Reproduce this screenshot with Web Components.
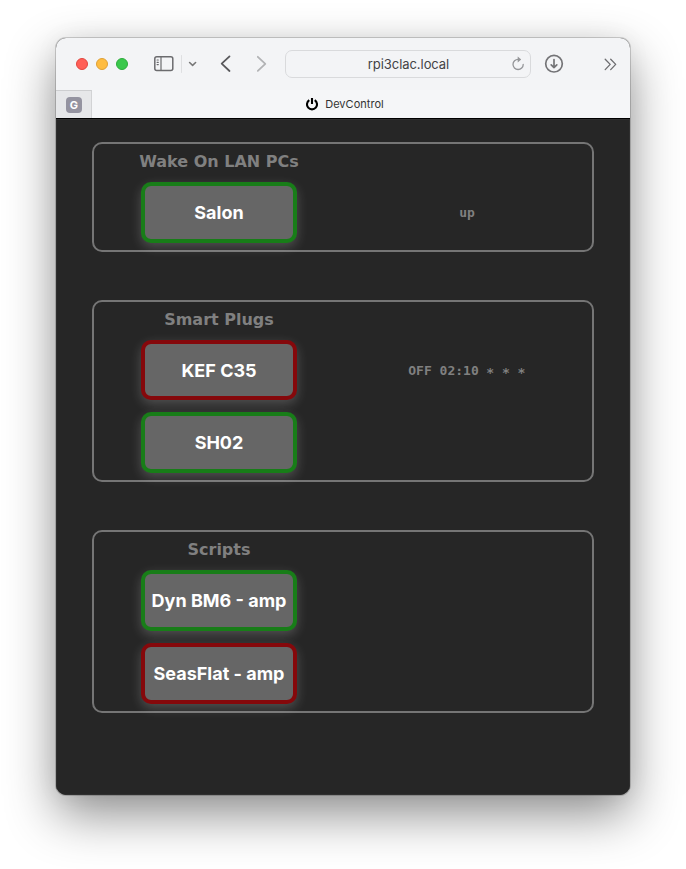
<!DOCTYPE html>
<html lang="en">
<head>
<meta charset="utf-8">
<title>DevControl</title>
<style>
html,body{margin:0;height:100%;background:#fff;overflow:hidden}
body{box-sizing:border-box;padding:38px 56px 74px}
</style>
</head>
<body>
<browser-window>
  <browser-toolbar slot="toolbar" address="rpi3clac.local"></browser-toolbar>
  <tab-strip slot="tabs" pinned="G">DevControl</tab-strip>
  <control-group heading="Wake On LAN PCs" style="height:110px">
    <device-row state="on" name="Salon" style="--h:61px">up</device-row>
  </control-group>
  <control-group heading="Smart Plugs" style="height:182px">
    <device-row state="off" name="KEF C35" style="--h:60px;--pb:0px">OFF 02:10 ∗ ∗ ∗</device-row>
    <device-row state="on" name="SH02" style="--h:61px"></device-row>
  </control-group>
  <control-group heading="Scripts" style="height:183px">
    <device-row state="on" name="Dyn BM6 - amp" style="--h:61px"></device-row>
    <device-row state="off" name="SeasFlat - amp" style="--h:61px"></device-row>
  </control-group>
</browser-window>
<script>
function define(name, render) {
  customElements.define(name, class extends HTMLElement {
    constructor() {
      super();
      this.attachShadow({mode: "open"}).innerHTML = render(this);
    }
  });
}

define("browser-window", () => `
<style>
:host{display:flex;flex-direction:column;box-sizing:border-box;width:574px;height:757px;border-radius:10px;overflow:hidden;background:#262626;
box-shadow:0 0 0 1px rgba(0,0,0,.17),0 20px 50px rgba(0,0,0,.44),0 0 24px rgba(0,0,0,.05)}
main{flex:1;display:flex;flex-direction:column;gap:48px;padding:23px 36px 0;border-top:1px solid #000;box-shadow:inset 0 0 0 1px #2f2f2f}
</style>
<slot name="toolbar"></slot><slot name="tabs"></slot><main><slot></slot></main>`);

define("browser-toolbar", el => `
<style>
:host{display:flex;align-items:center;height:52px;box-sizing:border-box;background:#f3f4f6;padding-left:20px;flex:none}
i{width:12px;height:12px;border-radius:50%;margin-right:8px;box-sizing:border-box;border:1px solid #e2463f;background:#ff5f57}
i.y{background:#febc40;border-color:#dfa035}i.g{background:#3ac84c;border-color:#2eac3c}
svg{display:block;fill:none;stroke-linecap:round;stroke-linejoin:round;flex:none}
.address{display:grid;grid-template-columns:1fr auto;align-items:center;box-sizing:border-box;width:246px;height:28px;border:1px solid #d9dadc;border-radius:7px;padding-right:5px;color:#434345;font:13px Inter,sans-serif}
.address span{text-align:center;padding-left:20px;letter-spacing:-.06px}
</style>
<i></i><i class="y"></i><i class="g"></i>
<svg style="margin-left:18px" width="50" height="20" viewBox="0 0 50 20"><g stroke="#6b6b6e" stroke-width="1.5"><rect x="0.8" y="2.7" width="18" height="13.8" rx="2"/><path d="M7 3v13.5M3.1 6h1.2M3.1 8.3h1.2M3.1 10.6h1.2" stroke-width="1.2"/></g><path d="M27.5 1.5v17" stroke="#dedfe1"/><path d="M35.6 8.5l3 2.8 3-2.8" stroke="#777" stroke-width="1.6"/></svg>
<svg style="margin-left:13px" width="52" height="20" viewBox="0 0 52 20"><path d="M12.5 2.4L4.7 9.7l7.8 7.3" stroke="#59595c" stroke-width="1.8"/><path d="M40.8 2.8l7.5 7-7.5 7" stroke="#b2b3b5" stroke-width="1.8"/></svg>
<div class="address" style="margin-left:16px"><span>${el.getAttribute("address")}</span>
<svg width="14" height="16" viewBox="0 0 14 16"><path d="M7.2 3.3A5.1 5.1 0 1 0 12.2 8.4" stroke="#949598" stroke-width="1.3"/><path d="M6.7.6l3.5 2.9-3.5 2.9z" fill="#949598"/></svg></div>
<svg style="margin-left:13px" width="20" height="20" viewBox="0 0 20 20" stroke="#747477" stroke-width="1.7"><circle cx="10" cy="9.7" r="8.3"/><path d="M10 5.6v8M7.2 10.9l2.8 2.8 2.8-2.8"/></svg>
<svg style="margin-left:39px" width="16" height="20" viewBox="0 0 16 20" stroke="#6d6d70" stroke-width="1.3"><path d="M2.2 5.2l5 5.2-5 5.2M7.7 5.2l5 5.2-5 5.2"/></svg>`);

define("tab-strip", el => `
<style>
:host{display:flex;height:28px;background:#f5f6f8;flex:none;font:11px Inter,sans-serif;color:#333}
.pin{width:36px;box-sizing:border-box;border-right:1px solid #d2d3d5;border-top:1px solid #cdced0;background:#e6e7e9;display:flex;align-items:center;padding-left:10px}
.pin b{width:16px;height:16px;border-radius:4px;background:#9493a0;color:#fff;font:bold 11px/17px Inter,sans-serif;text-align:center}
.tab{flex:1;display:flex;align-items:center;justify-content:center;gap:7px;padding-right:32px}
.tab span{letter-spacing:.04px}
svg{display:block}
</style>
<div class="pin"><b>${el.getAttribute("pinned")}</b></div>
<div class="tab"><svg width="12" height="14" viewBox="0 0 12 14" fill="none" stroke="#000" stroke-width="2.1"><path d="M3.3 3.2a5 5 0 1 0 5.4 0M6 1v6"/></svg><span><slot></slot></span></div>`);

define("control-group", el => `
<style>
:host{display:flex;flex-direction:column;gap:11px;box-sizing:border-box;border:2px solid #757575;border-radius:10px;width:502px;flex:none}
h2{width:250px;margin:0;text-align:center;font:bold 16px/19px "DejaVu Sans",sans-serif;color:#808080;padding-top:8px}
:host slot{display:flex;flex-direction:column;gap:12px}
</style>
<h2>${el.getAttribute("heading")}</h2><slot></slot>`);

define("device-row", el => `
<style>
:host{display:grid;grid-template-columns:250px 246px;align-items:center;height:var(--h);flex:none}
button{justify-self:center;width:156px;height:var(--h);box-sizing:border-box;border:4px solid #187d18;border-radius:10px;background:#666;color:#fff;padding:0 0 var(--pb,1px);white-space:nowrap;font:bold 18px Inter,sans-serif;box-shadow:0 4px 12px rgba(255,255,255,.2)}
:host([state=off]) button{border-color:#85080b}
span{text-align:center;font:bold 13px "DejaVu Sans Mono",monospace;color:#808080;white-space:pre}
</style>
<button>${el.getAttribute("name")}</button><span><slot></slot></span>`);
</script>
</body>
</html>
